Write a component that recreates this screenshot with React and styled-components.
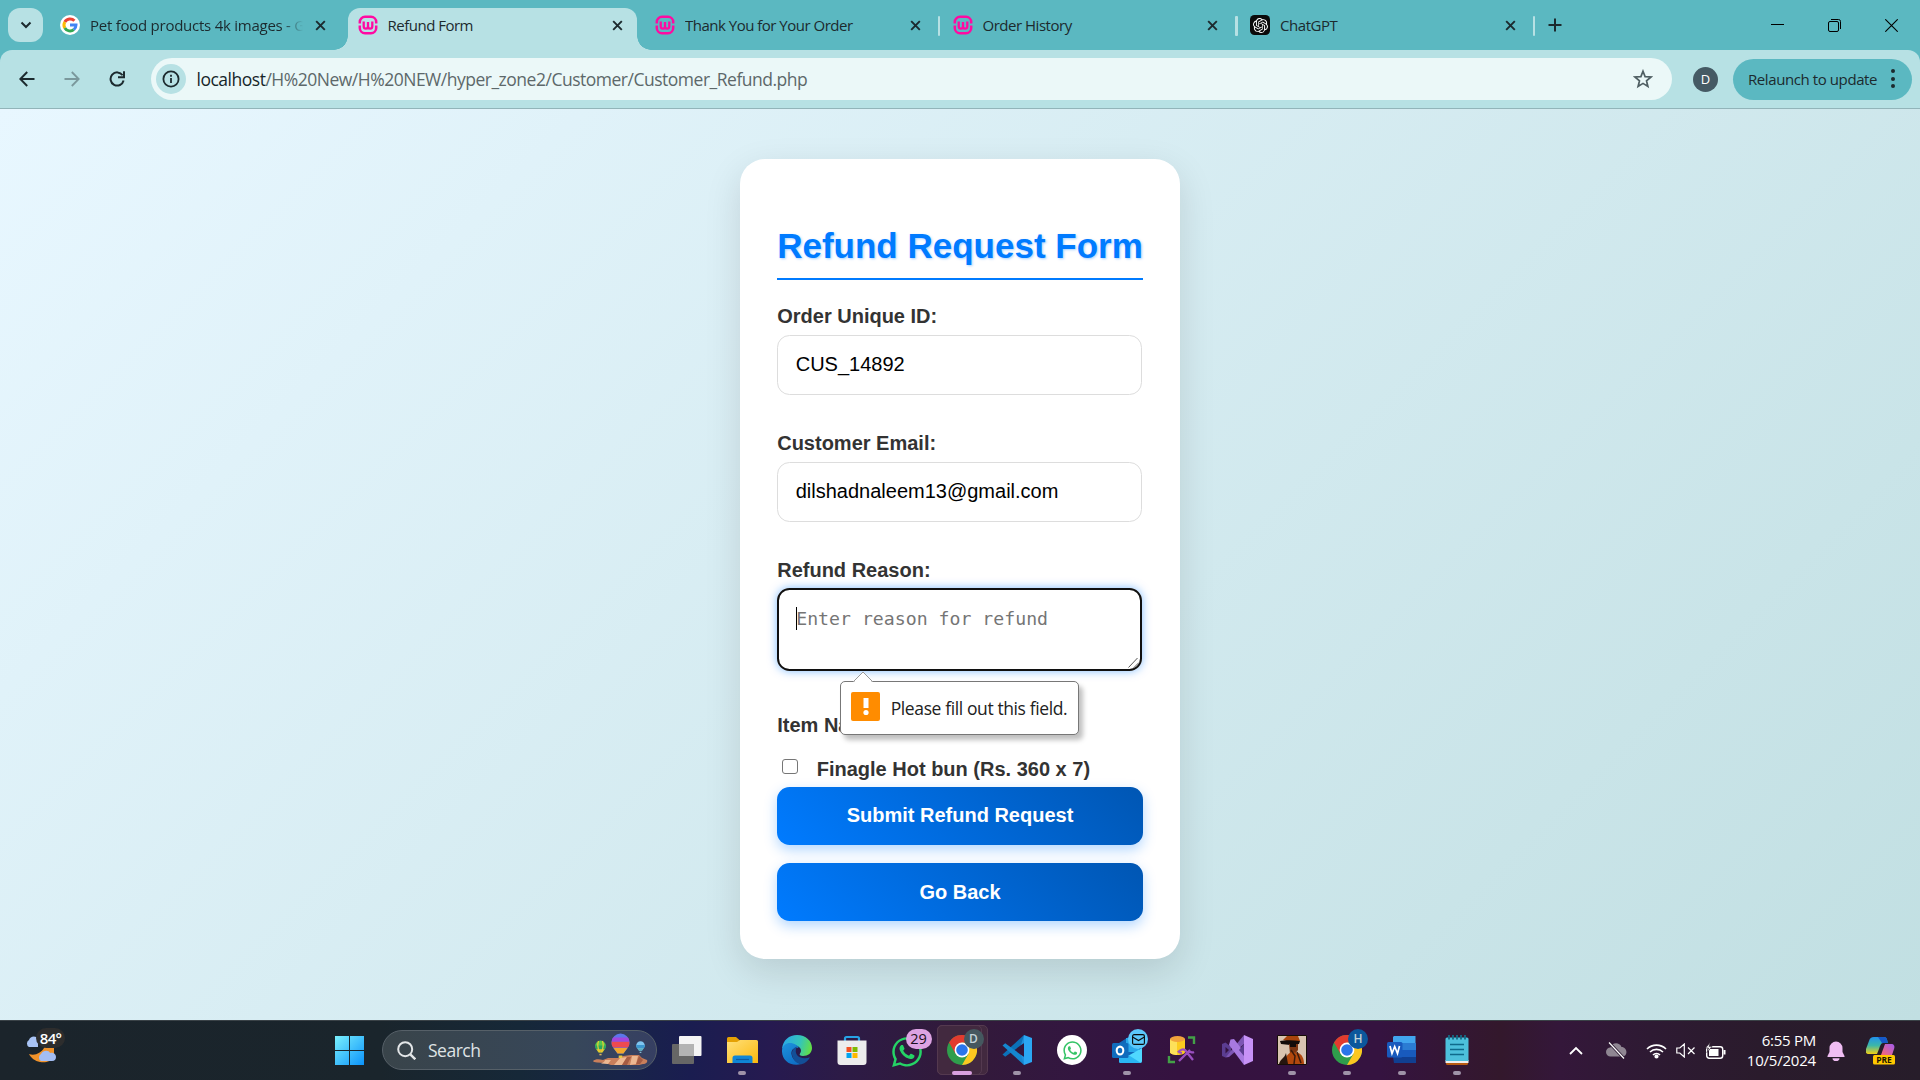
import React from "react";
import styled, { createGlobalStyle } from "styled-components";
import { FaWhatsapp } from "react-icons/fa";
import { SiOpenai } from "react-icons/si";

const ui = `"Open Sans", "Noto Sans", sans-serif`;
const arial = `"Liberation Sans", Arial, sans-serif`;

const Global = createGlobalStyle`
  * { box-sizing: border-box; }
  body { margin: 0; background: #d9edf3; overflow: hidden; }
  svg { display: block; flex: none; }
`;

const Screen = styled.div`
  width: 1920px;
  height: 1080px;
  display: flex;
  flex-direction: column;
  overflow: hidden;
  font-family: ${ui};
  color: #1c2a2e;
`;

const Fit = styled.span`
  white-space: nowrap;
  letter-spacing: ${(p) => p.$ls || 0}px;
`;

/* ---------- browser chrome ---------- */
const TabStrip = styled.div`
  height: 50px;
  flex: none;
  display: flex;
  align-items: flex-start;
  background: #5bb8c1;
  padding-left: 8px;
`;
const TabSearch = styled.div`
  width: 35px;
  height: 34px;
  margin: 8px 7px 0 0;
  border-radius: 12px;
  background: #b7e1e4;
  display: grid;
  place-items: center;
`;
const TabSlot = styled.div`
  width: 297.5px;
  height: 50px;
  padding-top: 7.5px;
  display: flex;
`;
const Tab = styled.div`
  position: relative;
  width: 289px;
  height: 42.5px;
  padding: 0 10px 7px;
  display: flex;
  align-items: center;
  border-radius: 12px 12px 0 0;
  background: ${(p) => (p.$active ? "#b7e1e4" : "transparent")};
  &::before,
  &::after {
    content: "";
    display: ${(p) => (p.$active ? "block" : "none")};
    position: absolute;
    bottom: 0;
    width: 14px;
    height: 14px;
  }
  &::before {
    left: -14px;
    background: radial-gradient(circle at 0 0, transparent 13.5px, #b7e1e4 14px);
  }
  &::after {
    right: -14px;
    background: radial-gradient(circle at 100% 0, transparent 13.5px, #b7e1e4 14px);
  }
`;
const TabTitle = styled.div`
  flex: 1;
  margin-left: 10px;
  height: 24px;
  line-height: 24px;
  font-size: 15px;
  overflow: hidden;
  white-space: nowrap;
  ${(p) =>
    p.$fade &&
    `mask-image: linear-gradient(90deg, #000 193px, transparent 213px);`}
`;
const TabClose = styled.div`
  width: 20px;
  margin-left: ${(p) => (p.$tight ? 4 : 10)}px;
  margin-right: -1px;
  display: grid;
  place-items: center;
`;
const TabSep = styled.div`
  width: 2.5px;
  height: 20px;
  margin: 8px 0 0 3.5px;
  border-radius: 1px;
  background: ${(p) => (p.$show ? "#b7e1e4" : "transparent")};
`;
const NewTab = styled.div`
  width: 35px;
  height: 50px;
  display: grid;
  place-items: center;
`;
const WindowButtons = styled.div`
  margin-left: auto;
  height: 50px;
  display: flex;
`;
const WindowButton = styled.div`
  width: 57px;
  display: grid;
  place-items: center;
`;
const ToolbarBack = styled.div`
  flex: none;
  background: #5bb8c1;
`;
const Toolbar = styled.div`
  height: 59px;
  padding: 8px 8px 8px 12px;
  display: flex;
  align-items: center;
  background: #b7e1e4;
  border-bottom: 1px solid #92b4b9;
  border-radius: 12px 12px 0 0;
`;
const ToolButton = styled.div`
  width: 30px;
  height: 30px;
  margin-right: ${(p) => p.$gap || 0}px;
  display: grid;
  place-items: center;
`;
const Omnibox = styled.div`
  width: 1521px;
  height: 42px;
  padding: 0 19px 0 5px;
  display: flex;
  align-items: center;
  background: #ebf8f8;
  border-radius: 21px;
`;
const SiteInfo = styled.div`
  width: 30px;
  height: 30px;
  border-radius: 50%;
  background: #b7e1e4;
  display: grid;
  place-items: center;
`;
const Url = styled.div`
  flex: 1;
  margin-left: 11px;
  font-size: 17.5px;
  line-height: 26px;
  color: #5d686a;
  b {
    font-weight: 400;
    color: #16262a;
  }
`;
const Avatar = styled.div`
  width: 25px;
  height: 25px;
  margin: 0 15px 0 21.5px;
  border-radius: 50%;
  background: #455a64;
  color: #fff;
  font-size: 13px;
  line-height: 25px;
  text-align: center;
`;
const Relaunch = styled.div`
  width: 179px;
  height: 41px;
  padding: 0 0 1px 15px;
  display: flex;
  align-items: center;
  border-radius: 21px;
  background: #5bb8c1;
  font-size: 15px;
`;
const Kebab = styled.div`
  margin: 0 17.5px 0 auto;
  display: flex;
  flex-direction: column;
  gap: 3.5px;
  i {
    width: 4px;
    height: 4px;
    border-radius: 50%;
    background: #1c2a2e;
  }
`;

/* ---------- page ---------- */
const Page = styled.main`
  flex: 1;
  display: flex;
  justify-content: center;
  align-items: flex-start;
  padding-top: 49.5px;
  background: linear-gradient(135deg, #e8f7ff, #c1dfe2);
  font-family: ${arial};
`;
const Card = styled.section`
  width: 440.6px;
  height: 800px;
  padding: 66.5px 37.5px 37.5px;
  background: #fff;
  border-radius: 25px;
  box-shadow: 0 12.5px 37.5px rgba(0, 0, 0, 0.12);
`;
const Title = styled.h2`
  margin: 0 0 24.5px;
  height: 55px;
  padding-bottom: 10.5px;
  border-bottom: 2.5px solid #007bff;
  color: #007bff;
  font-size: 35px;
  line-height: 42px;
  font-weight: 700;
  text-align: center;
  white-space: nowrap;
  text-shadow: 1.25px 1.25px 2.5px rgba(0, 123, 255, 0.35);
`;
const Label = styled.div`
  height: 23px;
  line-height: 23px;
  font-size: 20px;
  font-weight: 700;
  color: #333;
  white-space: nowrap;
`;
const Field = styled.div`
  width: 365px;
  height: 60px;
  margin: 7px 0 37px;
  padding: 0 17.5px;
  border: 1px solid #ddd;
  border-radius: 12.5px;
  font-size: 20px;
  line-height: 56px;
  color: #000;
`;
const TextArea = styled.div`
  position: relative;
  width: 365px;
  height: 82.5px;
  margin: 6.5px 0 43px;
  padding: 17px 17px;
  border: 2px solid #101010;
  border-radius: 12.5px;
  box-shadow: 0 0 10px rgba(0, 123, 255, 0.5);
  font-family: "DejaVu Sans Mono", monospace;
  font-size: 18.2px;
  line-height: 24px;
  color: #757575;
  white-space: nowrap;
`;
const Caret = styled.i`
  position: absolute;
  left: 17px;
  top: 17px;
  width: 1px;
  height: 23px;
  background: #000;
`;
const Grip = styled.svg`
  position: absolute;
  right: 0;
  bottom: 0;
`;
const Bubble = styled.div`
  position: absolute;
  left: 61px;
  top: 91px;
  width: 239px;
  height: 54px;
  padding: 0 0 0 10px;
  display: flex;
  align-items: center;
  background: #fff;
  border: 1px solid #777;
  border-radius: 5px;
  box-shadow: 4px 5px 5px rgba(0, 0, 0, 0.25);
  font-family: ${ui};
  font-size: 17.5px;
  color: #222;
`;
const BubbleArrow = styled.svg`
  position: absolute;
  left: 12px;
  top: -11px;
`;
const Alert = styled.div`
  width: 29px;
  height: 29px;
  margin: 0 10.5px 3px 0;
  border-radius: 2px;
  background: #ff8c00;
  display: grid;
  place-items: center;
`;
const CheckRow = styled.div`
  height: 23px;
  margin: 21px 0 6px;
  display: flex;
  align-items: center;
`;
const CheckBox = styled.div`
  width: 15.5px;
  height: 15.5px;
  margin: 0 19px 5px 5px;
  border: 1.2px solid #767676;
  border-radius: 3px;
`;
const Button = styled.button`
  display: block;
  width: 100%;
  height: 58px;
  margin: 0 0 18.5px;
  padding: 0.5px 0 0;
  border: 0;
  border-radius: 12.5px;
  background: linear-gradient(45deg, #007bff, #0056b3);
  box-shadow: 0 5px 12.5px rgba(0, 123, 255, 0.3);
  color: #fff;
  font: 700 20px ${arial};
`;

/* ---------- taskbar ---------- */
const Taskbar = styled.footer`
  height: 60px;
  flex: none;
  display: flex;
  align-items: stretch;
  border-top: 1px solid #3a4247;
  color: #fff;
  background: linear-gradient(
    90deg,
    #1b242b 0,
    #1a252c 380px,
    #162838 520px,
    #182448 620px,
    #1a1d50 690px,
    #261a50 770px,
    #2d1b45 850px,
    #321a3a 960px,
    #331640 1080px,
    #351240 1180px,
    #351340 1380px,
    #33182c 1500px,
    #34173a 1560px,
    #2e1a33 1650px,
    #2a1b2c 1760px,
    #271d2a 1920px
  );
`;
const Weather = styled.div`
  position: relative;
  width: 60px;
  margin: 14px 0 0 24px;
`;
const Temp = styled.div`
  position: absolute;
  left: 12px;
  top: -7px;
  width: 29px;
  height: 20px;
  border-radius: 10px;
  background: #2d2d2d;
  font-size: 15px;
  font-weight: 600;
  line-height: 20px;
  text-align: center;
  letter-spacing: -0.7px;
`;
const StartButton = styled.div`
  margin: 15px 0 0 251px;
`;
const SearchBox = styled.div`
  width: 275px;
  height: 40px;
  margin: 9px 0 0 18px;
  padding: 0 8px 0 14px;
  display: flex;
  align-items: center;
  border-radius: 20px;
  border: 1px solid #566068;
  background: linear-gradient(90deg, #39444a, #37475a 70%, #363f62);
  font-size: 17.5px;
  color: #dfe3e5;
`;
const SearchText = styled.div`
  flex: 1;
  margin-left: 12px;
`;
const Apps = styled.div`
  display: flex;
  margin-left: 2.5px;
`;
const AppButton = styled.div`
  position: relative;
  width: 55px;
  display: flex;
  flex-direction: column;
  align-items: center;
  padding-top: 14px;
`;
const ActiveTile = styled.div`
  position: absolute;
  inset: 4px 2px 5px 2px;
  border-radius: 5px;
  background: #42293f;
  border: 1px solid #54394f;
  &::after {
    content: "";
    position: absolute;
    inset: -1px 5px -1px -1px;
    border: 1px solid #54394f;
    border-radius: 5px;
  }
  & + svg {
    position: relative;
  }
`;
const Dot = styled.i`
  position: absolute;
  bottom: 5px;
  width: ${(p) => (p.$wide ? 20 : 8)}px;
  height: 4px;
  border-radius: 2px;
  background: ${(p) => (p.$wide ? "#d9a0e0" : "#9f93a8")};
`;
const Badge = styled.div`
  position: absolute;
  top: 8px;
  left: ${(p) => p.$x}px;
  width: ${(p) => p.$w || 20}px;
  height: 20px;
  border-radius: 10px;
  display: grid;
  place-items: center;
  background: ${(p) => p.$bg};
  color: ${(p) => p.$fg || "#c3d3d8"};
  font-size: ${(p) => p.$fs || 12}px;
  font-weight: ${(p) => p.$fw || 600};
  line-height: 20px;
`;
const WhatsGlyph = styled.div`
  height: 30px;
  display: grid;
  place-items: center;
  color: #25d366;
  font-size: 34px;
`;
const WhatsDisc = styled.div`
  width: 30px;
  height: 30px;
  border-radius: 50%;
  background: #fff;
  display: grid;
  place-items: center;
  color: #35c467;
  font-size: 21px;
`;
const Tray = styled.div`
  margin-left: auto;
  padding-right: 25px;
  display: flex;
  align-items: center;
`;
const TrayItem = styled.div`
  margin-right: ${(p) => p.$gap}px;
`;
const Clock = styled.div`
  width: 72px;
  margin-right: 11px;
  padding-bottom: 2px;
  font-size: 15px;
  line-height: 20px;
  display: flex;
  flex-direction: column;
  align-items: flex-end;
`;

/* ---------- icons ---------- */
const GoogleIcon = () => (
  <svg width="20" height="20" viewBox="0 0 20 20">
    <circle cx="10" cy="10" r="10" fill="#fff" />
    <g fill="none" strokeWidth="3">
      <path d="M14.4 5.8A6 6 0 0 0 4.8 7" stroke="#ea4335" />
      <path d="M4.8 7a6 6 0 0 0 0 6" stroke="#fbbc05" />
      <path d="M4.8 13a6 6 0 0 0 9 1.6" stroke="#34a853" />
      <path d="M13.8 14.6A6 6 0 0 0 16 10H10" stroke="#4285f4" />
    </g>
  </svg>
);
const WampIcon = () => (
  <svg width="20" height="20" viewBox="0 0 20 20" fill="none" stroke="#ff0aa2">
    <path
      d="M1.8 8.500V7a5.200 5.200 0 0 1 5.200-5.200h6A5.200 5.200 0 0 1 18.200 7v1.500M1.800 10.500V13a5.200 5.200 0 0 0 5.200 5.200h6a5.200 5.200 0 0 0 5.200-5.200v-2.500"
      strokeWidth="2.500"
    />
    <path d="M5.700 6.500v4.800a2.150 2.400 0 0 0 4.300 0V7v4.300a2.150 2.400 0 0 0 4.300 0V6.500" strokeWidth="2.300" />
  </svg>
);
const GptTile = styled.div`
  width: 20px;
  height: 20px;
  flex: none;
  border-radius: 4.5px;
  background: #0b0b0b;
  color: #fff;
  font-size: 15px;
  display: grid;
  place-items: center;
`;
const CloseIcon = () => (
  <svg width="11" height="11" viewBox="0 0 12 12" stroke="#1c2a2e" strokeWidth="2.1">
    <path d="M1.3 1.3l9.4 9.4M10.7 1.3l-9.4 9.4" />
  </svg>
);
const ChromeIcon = () => (
  <svg width="30" height="30" viewBox="0 0 30 30">
    <circle cx="15" cy="15" r="15" fill="#2f9e4c" />
    <path d="M15 7.5H28A15 15 0 0 1 15 30l6.5-11.2z" fill="#fcc720" />
    <path d="M15 7.500H28A15 15 0 0 0 2 7.500l6.500 11.300z" fill="#e23b2e" />
    <circle cx="15" cy="15" r="7.4" fill="#fff" />
    <circle cx="15" cy="15" r="5.8" fill="#2a75ea" />
  </svg>
);
const TaskViewIcon = () => (
  <svg width="30" height="30" viewBox="0 0 30 30">
    <rect x="0" y="9" width="22" height="20" rx="1" fill="#666" />
    <rect x="7" y="1" width="22.5" height="20" rx="1" fill="#f4f4f4" />
    <path d="M7 9h15v12H7z" fill="#b3b3b3" />
  </svg>
);
const FolderIcon = () => (
  <svg width="31" height="30" viewBox="0 0 31 30">
    <defs>
      <linearGradient id="fold" x1="0" y1="0" x2="1" y2="1">
        <stop offset="0" stopColor="#ffe07a" />
        <stop offset="1" stopColor="#fbb90d" />
      </linearGradient>
    </defs>
    <path d="M0 7V3.500A1.500 1.500 0 0 1 1.500 2H9l4 3.500V9H0z" fill="#e5a104" />
    <path d="M0 7h10l3-2h16.500A1.500 1.500 0 0 1 31 6.500V28H0z" fill="url(#fold)" />
    <path d="M5.500 28v-5a2.500 2.500 0 0 1 2.500-2.500h15a2.500 2.500 0 0 1 2.500 2.500v5z" fill="#0f86d6" />
    <path d="M9 24.500h13" stroke="#0a5ba3" strokeWidth="1.200" />
  </svg>
);
const EdgeIcon = () => (
  <svg width="30" height="30" viewBox="0 0 30 30">
    <defs>
      <linearGradient id="e1" x1="0" y1=".3" x2="1" y2=".5">
        <stop offset="0" stopColor="#2aa7e8" />
        <stop offset=".6" stopColor="#35c5b8" />
        <stop offset="1" stopColor="#63df45" />
      </linearGradient>
      <linearGradient id="e2" x1="0" y1="0" x2=".6" y2="1">
        <stop offset="0" stopColor="#1e93dd" />
        <stop offset="1" stopColor="#0f6fc5" />
      </linearGradient>
    </defs>
    <path d="M0 14C1 5 7 0 15 0c9 0 15 6 15 13 0 5-4 8-9 8-3 0-4-1.300-3-2.500 3-4-1-8.500-7-8.500-5 0-9 1-11 4z" fill="url(#e1)" />
    <path d="M0 15C1 9 6 7 11 8.500c3 .8 5 2.500 5.500 4.500C12 12 9 15 9.500 19c.6 5 5 9 10 10C8 32-.5 25 0 15z" fill="url(#e2)" />
    <path d="M15 11.500c-3 1-5.500 4-5 8 .5 5 5 9.500 9.500 9.800 4-1 7-4 8.500-7-3 1.300-7 1.500-10 0-4-2-5.500-6-3-10.800z" fill="#134f97" />
  </svg>
);
const StoreIcon = () => (
  <svg width="30" height="30" viewBox="0 0 30 30">
    <path d="M8 7V3.500A1.500 1.500 0 0 1 9.500 2h11A1.500 1.500 0 0 1 22 3.500V7" fill="none" stroke="#27a3e6" strokeWidth="2.200" />
    <path d="M.5 5.500h29V27a3 3 0 0 1-3 3h-23a3 3 0 0 1-3-3z" fill="#ececec" />
    <path d="M9.500 12h5v5h-5z" fill="#f25022" />
    <path d="M15.500 12h5v5h-5z" fill="#7fba00" />
    <path d="M9.500 18h5v5h-5z" fill="#00a4ef" />
    <path d="M15.500 18h5v5h-5z" fill="#ffb900" />
  </svg>
);
const CodeIcon = () => (
  <svg width="30" height="30" viewBox="0 0 30 30">
    <path d="M22 0L.5 19.500l2.700 2.300L24 6.500z" fill="#0b71b9" />
    <path d="M22 30L.5 10.500l2.700-2.300L24 23.500z" fill="#1587cf" />
    <path d="M22 0l8 3v24l-8 3z" fill="#2ba7f3" />
    <path d="M22 0v8l-3 2zM22 30v-8l-3-2z" fill="#2090dc" />
  </svg>
);
const OutlookIcon = () => (
  <svg width="31" height="30" viewBox="0 0 31 30">
    <path d="M7 8L18 1l12 7v18a2 2 0 0 1-2 2H9a2 2 0 0 1-2-2z" fill="#1067b8" />
    <path d="M14 3h13v14H14z" fill="#28a8ea" />
    <path d="M7 26l23-13v13a2 2 0 0 1-2 2H9a2 2 0 0 1-2-2z" fill="#4fd8ff" />
    <path d="M7 14l22 14H9a2 2 0 0 1-2-2z" fill="#2ab6f2" />
    <rect x="0" y="8" width="16.500" height="15" rx="1.500" fill="#0f6cbd" />
    <ellipse cx="8" cy="15.500" rx="3.300" ry="3.900" fill="none" stroke="#fff" strokeWidth="2.100" />
  </svg>
);
const SqlIcon = () => (
  <svg width="30" height="30" viewBox="0 0 30 30">
    <path d="M3 4v13c0 4 15 4 15 0V4z" fill="#fccb1e" />
    <path d="M3 4v13c0 2 4 3 7 3V4z" fill="#fde05a" />
    <ellipse cx="10.500" cy="4" rx="7.500" ry="2.900" fill="#f1a33c" />
    <path d="M21 2.500h6V9M2 21v6h6" fill="none" stroke="#43a047" strokeWidth="2.400" />
    <path d="M11 17.500c2-3 5-3.500 7-2.500l8 10M12 26l11-11M22 15a3.500 3.500 0 0 0 5 2M11 17l4 1" fill="none" stroke="#9a4fc0" strokeWidth="2.300" />
  </svg>
);
const VsIcon = () => (
  <svg width="31" height="30" viewBox="0 0 31 30">
    <path d="M0 9l3.500-1.500L9 12v6l-5.500 4.500L0 21z" fill="#5b3d91" />
    <path d="M3.500 12v6.500L7 15z" fill="#351340" />
    <path d="M3.500 22.500L22 0v9L7 22z" fill="#7d56b4" />
    <path d="M8.500 4.500l3.500-.5 10 13v13L7 10z" fill="#a779e0" />
    <path d="M22 0l9 4v22l-9 4z" fill="#c792f7" />
    <path d="M22 9v12l-5-6z" fill="#5b3d91" />
  </svg>
);
const HatIcon = () => (
  <svg width="30" height="30" viewBox="0 0 30 30">
    <path d="M.5.5h29v29H.5z" fill="#d8c4b0" stroke="#160d08" />
    <path d="M6 5l4-4h11l2 5-9 1z" fill="#a8440c" />
    <path d="M3 6c5-1 13-1 20 0l-1 3-9 1-9-1z" fill="#120c0a" />
    <path d="M12 9h9v6l-3 4h-5z" fill="#7b3512" />
    <path d="M13 9h6v3h-6z" fill="#120c0a" />
    <path d="M7 29c0-6 4-11 8-12l6 1c4 1 6 6 6 11z" fill="#b2480d" />
    <path d="M2 29c2-6 5-5 7-11l2 11z" fill="#26150d" />
    <path d="M14 15l4 6-1 8M20 17l4 11" stroke="#3b1b0c" strokeWidth="1.500" fill="none" />
  </svg>
);
const WordIcon = () => (
  <svg width="30" height="30" viewBox="0 0 30 30">
    <path d="M7 1h21.500v7H6V2z" fill="#41a5ee" />
    <path d="M6 8h23v7H6z" fill="#2b7cd3" />
    <path d="M6 15h23v7H6z" fill="#185abd" />
    <path d="M6 22h23v6H7z" fill="#103f91" />
    <rect x="0" y="7" width="15.500" height="15.500" rx="1.500" fill="#185abd" />
    <path d="M3 11l2 7.500L7.700 11.500 10.500 18.500l2-7.500" fill="none" stroke="#fff" strokeWidth="1.700" />
  </svg>
);
const NotepadIcon = () => (
  <svg width="24" height="30" viewBox="0 0 24 30">
    <path d="M1 27h22v1.500a1.500 1.500 0 0 1-1.500 1.500h-19A1.500 1.500 0 0 1 1 28.500z" fill="#b85b12" />
    <path d="M.5 25h23v3H.5z" fill="#eee" />
    <path d="M2 2.500h20A1.500 1.500 0 0 1 23.500 4v22H.5V4A1.500 1.500 0 0 1 2 2.500z" fill="#4dc0dc" />
    <path d="M4 0v4.500M8 0v4.500M12 0v4.500M16 0v4.500M20 0v4.500" stroke="#136b86" strokeWidth="1.800" />
    <path d="M5 9.500h14M5 14.500h14M5 19.500h14" stroke="#0f6a8b" strokeWidth="1.600" />
  </svg>
);
const Balloon = ({ x, y, s, c }) => (
  <g transform={`translate(${x} ${y}) scale(${s})`}>
    <path d="M0-9a9 9 0 0 1 9 9c0 4-4 8-6 11h-6c-2-3-6-7-6-11a9 9 0 0 1 9-9z" fill={c[0]} />
    <path d="M-8.900-1h17.800A9 9 0 0 1 7.500 5h-15A9 9 0 0 1-8.900-1z" fill={c[1]} />
    <path d="M-7 5.500H7L3 11h-6z" fill={c[2]} />
    <path d="M-1.800 13h3.600v2.500h-3.600z" fill={c[3]} />
  </g>
);
const BalloonsIcon = () => (
  <svg width="55" height="34" viewBox="0 0 55 34">
    <path d="M0 28c2-2 6-2 10-1l5-2h10l5-2 8-1h8l3 3 5 2c1 2-1 4-4 4l-4 1H18l-6-2-8-.500c-2 0-4-1-4-1.500z" fill="#c97f5b" />
    <path d="M12 27h6l-3 4-7-.500c2-1 4-2 4-3.500zM27 25l7-1-5 8h-8zM39 23l6 0-2 8-6 1z" fill="#edb892" />
    <path d="M46 23l4 4-3 4-4 .500zM34 24l4 0-4 8h-5z" fill="#a65c43" />
    <Balloon x={27.5} y={9.5} s={1} c={["#5b76ea", "#ee4a50", "#f2a72c", "#e8c840"]} />
    <path d="M18.600 8.500A9 9 0 0 1 20 4.500h15a9 9 0 0 1 1.400 4z" fill="#a445dd" />
    <Balloon x={7.5} y={13} s={0.6} c={["#55c84c", "#2ba561", "#e5b92e", "#d9b65e"]} />
    <path d="M5.500 8c-1 3-1 7 1 11M9.500 8c1 3 1 7-1 11" stroke="#e6cf35" strokeWidth="1.200" fill="none" />
    <Balloon x={47.5} y={12.5} s={0.48} c={["#7fc5f0", "#3c96cf", "#5aa9bd", "#8ac3d8"]} />
  </svg>
);

const tabs = [
  { t: "Pet food products 4k images - G", icon: <GoogleIcon />, fade: true, ls: -0.25 },
  { t: "Refund Form", icon: <WampIcon />, active: true, ls: -0.5 },
  { t: "Thank You for Your Order", icon: <WampIcon />, sep: true, ls: -0.5 },
  { t: "Order History", icon: <WampIcon />, sep: true, ls: -0.48 },
  {
    t: "ChatGPT",
    icon: (
      <GptTile>
        <SiOpenai />
      </GptTile>
    ),
    sep: true,
    ls: -0.45,
  },
];

const apps = [
  { icon: <TaskViewIcon /> },
  { icon: <FolderIcon />, dot: true },
  { icon: <EdgeIcon /> },
  { icon: <StoreIcon /> },
  {
    icon: (
      <WhatsGlyph>
        <FaWhatsapp />
      </WhatsGlyph>
    ),
    badge: (
      <Badge $x={26} $w={26} $bg="#dda3e3" $fg="#1b1020" $fs={14.5} $fw={400}>
        29
      </Badge>
    ),
  },
  { icon: <ChromeIcon />, wide: true, badge: <Badge $x={29} $bg="#45585f">D</Badge> },
  { icon: <CodeIcon />, dot: true },
  {
    icon: (
      <WhatsDisc>
        <FaWhatsapp />
      </WhatsDisc>
    ),
  },
  {
    icon: <OutlookIcon />,
    dot: true,
    badge: (
      <Badge $x={28.5} $bg="#5cc8fa">
        <svg width="13" height="11" viewBox="0 0 13 11" fill="none" stroke="#0a0a0a" strokeWidth="1.1">
          <rect x=".6" y=".6" width="11.8" height="9.8" rx="1.5" />
          <path d="M.6 3l5.900 3.500L12.400 3" />
        </svg>
      </Badge>
    ),
  },
  { icon: <SqlIcon /> },
  { icon: <VsIcon /> },
  { icon: <HatIcon />, dot: true },
  { icon: <ChromeIcon />, dot: true, badge: <Badge $x={28.5} $bg="#0b579c">H</Badge> },
  { icon: <WordIcon />, dot: true },
  { icon: <NotepadIcon />, dot: true },
];

export default function App() {
  return (
    <Screen>
      <Global />
      <TabStrip>
        <TabSearch>
          <svg width="12" height="8" viewBox="0 0 12 8" fill="none" stroke="#1c2a2e" strokeWidth="2">
            <path d="M1.500 1.500L6 6l4.500-4.500" />
          </svg>
        </TabSearch>
        {tabs.map((tab, i) => (
          <TabSlot key={i}>
            <Tab $active={tab.active}>
              {tab.icon}
              <TabTitle $fade={tab.fade}>
                <Fit $ls={tab.ls}>{tab.t}</Fit>
              </TabTitle>
              <TabClose $tight={tab.fade}>
                <CloseIcon />
              </TabClose>
            </Tab>
            <TabSep $show={tab.sep} />
          </TabSlot>
        ))}
        <NewTab>
          <svg width="14" height="14" viewBox="0 0 14 14" stroke="#1c2a2e" strokeWidth="2">
            <path d="M7 .5v13M.5 7h13" />
          </svg>
        </NewTab>
        <WindowButtons>
          <WindowButton>
            <svg width="13" height="13" viewBox="0 0 13 13" stroke="#000">
              <path d="M0 5.500h13" />
            </svg>
          </WindowButton>
          <WindowButton>
            <svg width="13" height="13" viewBox="0 0 13 13" fill="none" stroke="#000">
              <rect x=".5" y="2.5" width="10" height="10" rx="1.5" />
              <path d="M3 .5h7.500a2 2 0 0 1 2 2V10" />
            </svg>
          </WindowButton>
          <WindowButton>
            <svg width="13" height="13" viewBox="0 0 13 13" stroke="#000" strokeWidth="1.1">
              <path d="M.3.300l12.400 12.400M12.700.300L.3 12.700" />
            </svg>
          </WindowButton>
        </WindowButtons>
      </TabStrip>
      <ToolbarBack>
        <Toolbar>
          <ToolButton $gap={15}>
            <svg width="16" height="16" viewBox="0 0 16 16" fill="none" stroke="#1c2a2e" strokeWidth="2">
              <path d="M15.500 8H1.500M8.200 1L1.300 8l6.900 7" />
            </svg>
          </ToolButton>
          <ToolButton $gap={15}>
            <svg width="16" height="16" viewBox="0 0 16 16" fill="none" stroke="#7b989c" strokeWidth="1.8">
              <path d="M.5 8h14M7.800 1l6.900 7-6.900 7" />
            </svg>
          </ToolButton>
          <ToolButton $gap={18.5}>
            <svg width="16" height="16" viewBox="0 0 16 16" fill="none" stroke="#1c2a2e" strokeWidth="2">
              <path d="M13.600 4.200A6.600 6.600 0 1 0 14.600 9.500" />
              <path d="M15 .3v6H9" />
            </svg>
          </ToolButton>
          <Omnibox>
            <SiteInfo>
              <svg width="18" height="18" viewBox="0 0 18 18" fill="none" stroke="#1c2a2e" strokeWidth="1.8">
                <circle cx="9" cy="9" r="7.6" />
                <path d="M9 8v5M9 4.800v1.900" />
              </svg>
            </SiteInfo>
            <Url>
              <Fit $ls={-0.49}>
                <b>localhost</b>/H%20New/H%20NEW/hyper_zone2/Customer/Customer_Refund.php
              </Fit>
            </Url>
            <svg width="20" height="20" viewBox="0 0 20 20" fill="none" stroke="#4f5f63" strokeWidth="1.7">
              <path d="M10 2.200l2.100 5.400 5.900.4-4.500 3.800 1.400 5.700L10 14.400l-4.900 3.100 1.400-5.700L2 8l5.900-.4z" />
            </svg>
          </Omnibox>
          <Avatar>D</Avatar>
          <Relaunch>
            <Fit $ls={-0.41}>Relaunch to update</Fit>
            <Kebab>
              <i />
              <i />
              <i />
            </Kebab>
          </Relaunch>
        </Toolbar>
      </ToolbarBack>

      <Page>
        <Card>
          <Title>Refund Request Form</Title>
          <Label>Order Unique ID:</Label>
          <Field>CUS_14892</Field>
          <Label>Customer Email:</Label>
          <Field>dilshadnaleem13@gmail.com</Field>
          <Label>Refund Reason:</Label>
          <TextArea>
            <Caret />
            Enter reason for refund
            <Grip width="12" height="12" viewBox="0 0 12 12" fill="none" stroke="#555">
              <path d="M.5 10.500L9.500 1M5.500 11L11 5.500" />
            </Grip>
            <Bubble>
              <BubbleArrow width="20" height="12" viewBox="0 0 20 12">
                <path d="M0 12L10 1l10 11z" fill="#fff" />
                <path d="M0 11L10 1l10 10" fill="none" stroke="#999" />
              </BubbleArrow>
              <Alert>
                <svg width="6" height="18" viewBox="0 0 6 18" fill="#fff">
                  <path d="M.5 0h5v10h-5z" />
                  <circle cx="3" cy="14.5" r="2.6" />
                </svg>
              </Alert>
              <Fit $ls={-0.39}>Please fill out this field.</Fit>
            </Bubble>
          </TextArea>
          <Label>Item Name:</Label>
          <CheckRow>
            <CheckBox />
            <Label>Finagle Hot bun (Rs. 360 x 7)</Label>
          </CheckRow>
          <Button>Submit Refund Request</Button>
          <Button>Go Back</Button>
        </Card>
      </Page>

      <Taskbar>
        <Weather>
          <svg width="34" height="30" viewBox="0 0 34 30">
            <path d="M5 19c6 2 12-1 15-6 2-2 4-3 10-2v10c-3 6-9 7-14 6-5-1-9-4-11-8z" fill="#f0922a" />
            <path d="M5 12a4 4 0 0 1 0-7c1-4 7-5 9-1v8z" fill="#a9c4f5" />
            <path d="M17 26a4 4 0 0 1 0-7c2-4 8-4 9-1 4-1 6 2 6 4s-1 4-4 4z" fill="#a3bdf3" />
          </svg>
          <Temp>84°</Temp>
        </Weather>
        <StartButton>
          <svg width="29" height="29" viewBox="0 0 29 29">
            <defs>
              <linearGradient id="win" x1="0" y1="0" x2="1" y2="1">
                <stop offset="0" stopColor="#7af0fd" />
                <stop offset="1" stopColor="#0b93fb" />
              </linearGradient>
            </defs>
            <path d="M0 0h14v14H0zM15 0h14v14H15zM0 15h14v14H0zM15 15h14v14H15z" fill="url(#win)" />
          </svg>
        </StartButton>
        <SearchBox>
          <svg width="19" height="19" viewBox="0 0 19 19" fill="none" stroke="#e3e6e8" strokeWidth="2">
            <circle cx="8.2" cy="8.2" r="7" />
            <path d="M13.300 13.300l5 5" strokeWidth="2.4" />
          </svg>
          <SearchText>
            <Fit $ls={-0.5}>Search</Fit>
          </SearchText>
          <BalloonsIcon />
        </SearchBox>
        <Apps>
          {apps.map((a, i) => (
            <AppButton key={i}>
              {a.wide && <ActiveTile />}
              {a.icon}
              {a.badge}
              {(a.dot || a.wide) && <Dot $wide={a.wide} />}
            </AppButton>
          ))}
        </Apps>
        <Tray>
          <TrayItem $gap={23}>
            <svg width="14" height="9" viewBox="0 0 14 9" fill="none" stroke="#fff" strokeWidth="1.8">
              <path d="M1 8l6-6 6 6" />
            </svg>
          </TrayItem>
          <TrayItem $gap={19}>
            <svg width="21" height="17" viewBox="0 0 21 17">
              <path d="M4.500 14.500a4.500 4.500 0 0 1 0-9c1-5 9-6 11-.500 6 0 7 9.500.500 9.500z" fill="#8f8692" />
              <path d="M3 .5l15 16" stroke="#2e1a33" strokeWidth="3" />
              <path d="M3 .5l15 16" stroke="#fff" strokeWidth="1.2" />
            </svg>
          </TrayItem>
          <TrayItem $gap={9}>
            <svg width="21" height="16" viewBox="0 0 21 16" fill="none" stroke="#fff" strokeWidth="1.6">
              <path d="M1 6a13.500 13.500 0 0 1 19 0M4 9a9.300 9.300 0 0 1 13 0M7 12a5 5 0 0 1 7 0" />
              <circle cx="10.5" cy="13.5" r="1.3" fill="#fff" />
            </svg>
          </TrayItem>
          <TrayItem $gap={10}>
            <svg width="19" height="15" viewBox="0 0 19 15" fill="none" stroke="#fff" strokeWidth="1.2">
              <path d="M.8 5v5h3l4.500 4V1L3.800 5zM12 4.500l6.500 6.500M18.500 4.500L12 11" />
            </svg>
          </TrayItem>
          <TrayItem $gap={18}>
            <svg width="21" height="17" viewBox="0 0 21 17">
              <rect x="1.7" y="4.7" width="16" height="11.5" rx="2.5" fill="none" stroke="#fff" strokeWidth="1.4" />
              <path d="M18.500 8h2v4.500h-2zM4 7h9.500v7H4z" fill="#fff" />
              <path d="M5.500 0L.5 6h3L2 10.500l5-6H4z" fill="#fff" stroke="#2a1b2c" strokeWidth=".7" />
            </svg>
          </TrayItem>
          <Clock>
            <Fit $ls={-0.25}>6:55 PM</Fit>
            <Fit $ls={-0.2}>10/5/2024</Fit>
          </Clock>
          <TrayItem $gap={21}>
            <svg width="18" height="20" viewBox="0 0 18 20" fill="#f0bdf3">
              <path d="M.5 15l2-4V7a6.500 6.500 0 0 1 13 0v4l2 4v1H.5z" />
              <path d="M5.500 17.200h7a3.500 2.800 0 0 1-7 0z" />
            </svg>
          </TrayItem>
          <svg width="29" height="29" viewBox="0 0 29 29">
            <defs>
              <linearGradient id="cp1" x1="0" y1="0" x2="0" y2="1">
                <stop offset="0" stopColor="#2192ec" />
                <stop offset=".5" stopColor="#3cb7a8" />
                <stop offset="1" stopColor="#f3d013" />
              </linearGradient>
              <linearGradient id="cp2" x1="1" y1="0" x2="0" y2="1">
                <stop offset="0" stopColor="#a25bf0" />
                <stop offset="1" stopColor="#fb6a70" />
              </linearGradient>
            </defs>
            <path d="M8 1h10c3 0 3 3 4 6h-5c-2 0-3 3-4 6l-2 5H3c-3 0-4-2-3-5l3-8c1-3 2-4 5-4z" fill="url(#cp1)" />
            <path d="M12 1h6c3 0 3 3 4 6h-6z" fill="#1659c9" />
            <path d="M19 8h6c3 0 4 2 3 5l-2 6H15z" fill="url(#cp2)" />
            <rect x="7" y="19" width="22" height="9.5" rx="1.5" fill="#ffc800" />
            <text
              x="18"
              y="27"
              textAnchor="middle"
              fontFamily="Open Sans, sans-serif"
              fontSize="8.5"
              fontWeight="700"
              fill="#1b1400"
            >
              PRE
            </text>
          </svg>
        </Tray>
      </Taskbar>
    </Screen>
  );
}
